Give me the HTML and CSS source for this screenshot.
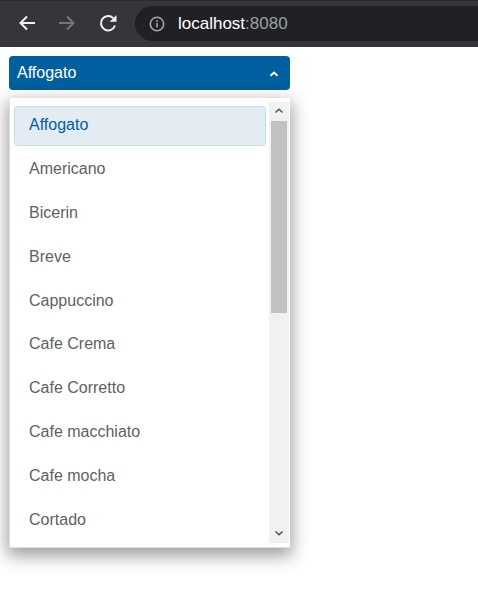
FILE: index.html
```html
<!DOCTYPE html>
<html lang="en">
<head>
<meta charset="utf-8">
<title>localhost:8080</title>
<link rel="stylesheet" href="styles.css">
</head>
<body>
<header class="toolbar">
  <svg class="nav-icon" width="20" height="20" viewBox="0 0 20 20"><path d="M18 10H3.500M10 3.500L3.500 10l6.500 6.500" fill="none" stroke="#f1f1f2" stroke-width="2"/></svg>
  <svg class="nav-icon" width="20" height="20" viewBox="0 0 20 20"><path d="M2 10h14.500M10 3.500l6.500 6.500-6.500 6.500" fill="none" stroke="#75767a" stroke-width="2"/></svg>
  <svg class="nav-icon" width="20" height="20" viewBox="0 0 20 20"><path d="M18 12.500A7.200 7.200 0 1 1 16.300 5.100" fill="none" stroke="#f1f1f2" stroke-width="2"/><path d="M19.500 2v6.800H12.700z" fill="#f1f1f2"/></svg>
  <div class="address">
    <svg width="16" height="16" viewBox="0 0 16 16"><circle cx="8" cy="8" r="6.700" fill="none" stroke="#a3a4a7" stroke-width="1.600"/><path d="M7.200 7h1.600v4.500H7.200zM7.200 4.300h1.600v1.600H7.200z" fill="#a3a4a7"/></svg>
    <span class="url"><span class="host">localhost</span>:8080</span>
  </div>
</header>
<main class="page">
  <div class="dropdown">
    <button class="trigger" type="button">
      <span>Affogato</span>
      <svg width="10" height="10" viewBox="0 0 10 10"><path d="M1.500 6.800L5 3.500l3.500 3.300" fill="none" stroke="#fff" stroke-width="2"/></svg>
    </button>
    <div class="popup">
      <ul class="list">
        <li class="item selected">Affogato</li>
        <li class="item">Americano</li>
        <li class="item">Bicerin</li>
        <li class="item">Breve</li>
        <li class="item">Cappuccino</li>
        <li class="item">Cafe Crema</li>
        <li class="item">Cafe Corretto</li>
        <li class="item">Cafe macchiato</li>
        <li class="item">Cafe mocha</li>
        <li class="item">Cortado</li>
      </ul>
      <div class="scrollbar">
        <svg class="arrow" width="10" height="10" viewBox="0 0 10 10"><path d="M1.500 6.500L5 3.300l3.500 3.200" fill="none" stroke="#50525a" stroke-width="1.500"/></svg>
        <div class="track"><div class="thumb"></div></div>
        <svg class="arrow" width="10" height="10" viewBox="0 0 10 10"><path d="M1.500 3.500L5 6.700l3.500-3.200" fill="none" stroke="#50525a" stroke-width="1.500"/></svg>
      </div>
    </div>
  </div>
</main>
</body>
</html>
```

FILE: styles.css
```css
* {
  box-sizing: border-box;
}

html,
body {
  margin: 0;
  height: 100%;
  background: #fff;
  overflow: hidden;
}

body {
  font-family: "Liberation Sans", Arial, sans-serif;
}

.toolbar {
  display: flex;
  align-items: center;
  height: 47px;
  padding: 0 0 2px 17px;
  gap: 20px;
  background: #35363a;
  border-top: 1px solid #2a2b2e;
}

.nav-icon {
  flex: none;
}

.address {
  display: flex;
  align-items: center;
  gap: 13px;
  flex: 1;
  height: 35px;
  margin: 1px -20px 0 -2px;
  padding-left: 14px;
  background: #202124;
  border-radius: 18px;
}

.url {
  font-size: 17px;
  letter-spacing: 0;
  color: #9aa0a6;
}

.host {
  color: #fff;
}

.page {
  padding: 9px 0 0 9px;
}

.dropdown {
  width: 281px;
}

.trigger {
  display: flex;
  align-items: center;
  justify-content: space-between;
  width: 100%;
  height: 34px;
  padding: 0 11px 0 8px;
  background: #005f9e;
  border: 0;
  border-radius: 4px;
  color: #fff;
  font: 16px "Liberation Sans", Arial, sans-serif;
}

.trigger svg {
  margin-top: 2px;
}

.popup {
  display: flex;
  justify-content: space-between;
  height: 450px;
  margin-top: 8px;
  padding: 4px 0;
  background: #fff;
  border: 1px solid #dedede;
  border-width: 0 0 1px 1px;
  box-shadow: 0 6px 16px 2px rgba(0, 0, 0, 0.38);
}

.list {
  flex: none;
  width: 256px;
  margin: 0;
  padding: 4px 0 0 4px;
  list-style: none;
  overflow: hidden;
}

.item {
  display: flex;
  align-items: center;
  height: 40px;
  margin-bottom: 3.900px;
  padding: 0 14px 2px;
  border: 1px solid transparent;
  border-radius: 4px;
  font-size: 16px;
  color: #5f5f5f;
}

.item.selected {
  background: #e3ebf3;
  border-color: #c6dbe9;
  color: #005f9e;
}

.scrollbar {
  display: flex;
  flex-direction: column;
  flex: none;
  width: 20px;
  margin-right: 1px;
  background: #f1f1f1;
}

.arrow {
  flex: none;
  margin: 4px auto 5px;
}

.track {
  flex: 1;
  padding: 0 2px;
}

.thumb {
  height: 192px;
  background: #c1c1c1;
}
```
